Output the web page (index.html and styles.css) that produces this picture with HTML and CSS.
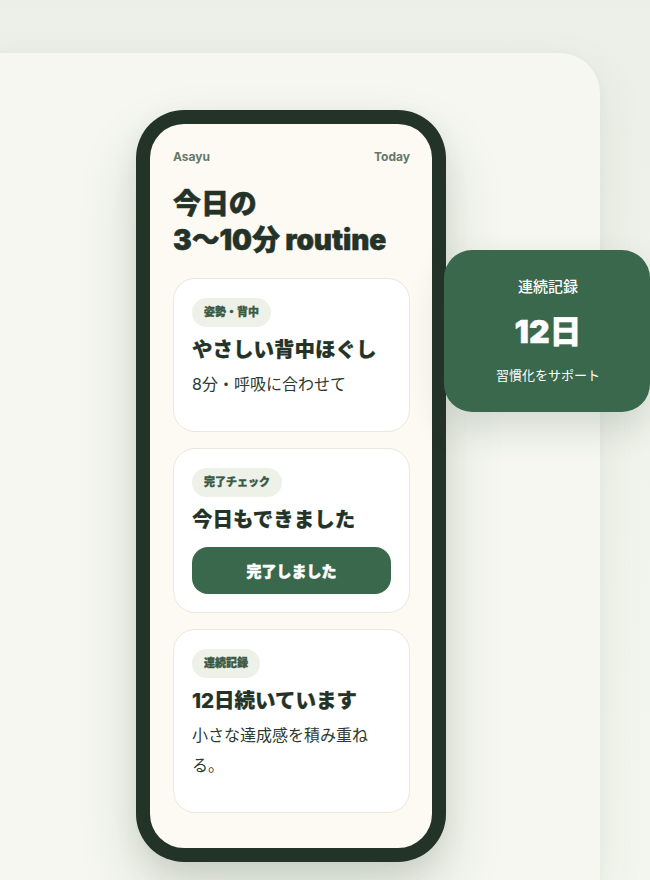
FILE: index.html
```html
<!DOCTYPE html>
<html lang="ja">
<head>
<meta charset="utf-8">
<title>Asayu</title>
<link rel="stylesheet" href="styles.css">
</head>
<body>
<div class="stage">
  <div class="panel">
    <div class="phone">
      <div class="screen">
        <div class="top">
          <span>Asayu</span>
          <span>Today</span>
        </div>
        <h1 class="title">今日の<br>3〜10分 routine</h1>
        <div class="cards">
          <div class="card">
            <span class="pill">姿勢・背中</span>
            <h2 class="card-title">やさしい背中ほぐし</h2>
            <p class="card-text">8分・呼吸に合わせて</p>
          </div>
          <div class="card">
            <span class="pill">完了チェック</span>
            <h2 class="card-title">今日もできました</h2>
            <button class="done">完了しました</button>
          </div>
          <div class="card">
            <span class="pill">連続記録</span>
            <h2 class="card-title">12日続いています</h2>
            <p class="card-text">小さな達成感を積み重ねる。</p>
          </div>
        </div>
      </div>
    </div>
  </div>
  <div class="streak">
    <div class="streak-label">連続記録</div>
    <div class="streak-num">12日</div>
    <div class="streak-sub">習慣化をサポート</div>
  </div>
</div>
</body>
</html>
```
FILE: styles.css
```css
* { box-sizing: border-box; }
html, body {
  margin: 0;
  padding: 0;
  width: 650px;
  height: 880px;
  overflow: hidden;
}
body {
  background: linear-gradient(180deg, #ebefe7 0%, #f1f4ec 60%, #f3f6ee 100%);
  font-family: "Inter", "Noto Sans CJK JP", sans-serif;
  color: #243328;
}
.stage {
  position: relative;
  height: 880px;
  padding-top: 53px;
}
.panel {
  margin-left: -40px;
  width: 640px;
  height: 827px;
  background: #f5f7f0;
  border-radius: 40px 40px 0 0;
  box-shadow: 0 18px 50px rgba(60, 80, 60, 0.08), 0 2px 8px rgba(60, 80, 60, 0.04);
  padding: 57px 0 0 176px;
}
.phone {
  width: 310px;
  height: 752px;
  background: #243328;
  border-radius: 48px;
  padding: 14px;
  box-shadow: 0 30px 60px rgba(40, 60, 40, 0.16), 0 10px 24px rgba(40, 60, 40, 0.08);
}
.screen {
  height: 100%;
  background: #fdf9f3;
  border-radius: 34px;
  padding: 25px 22px 0 23px;
}
.top {
  display: flex;
  justify-content: space-between;
  font-size: 12px;
  font-weight: 700;
  line-height: 15px;
  color: #647868;
}
.title {
  margin: 22px 0 0;
  font-size: 28px;
  line-height: 36px;
  font-weight: 900;
  letter-spacing: -0.1px;
  color: #243328;
  -webkit-text-stroke: 0.5px #243328;
}
.cards {
  margin-top: 20px;
  display: flex;
  flex-direction: column;
  gap: 16px;
}
.card {
  background: #ffffff;
  border: 1px solid #ebe8de;
  border-radius: 22px;
  padding: 19px 18px 18px;
}
.pill {
  display: inline-block;
  height: 29px;
  line-height: 29px;
  padding: 0 12px;
  border-radius: 15px;
  background: #eef1e8;
  color: #3a5a44;
  font-size: 11px;
  font-weight: 900;
  -webkit-text-stroke: 0.35px #3a5a44;
}
.card-title {
  margin: 8px 0 0;
  font-size: 20.5px;
  line-height: 29px;
  font-weight: 800;
  color: #243328;
  -webkit-text-stroke: 0.2px #243328;
}
.card-text {
  margin: 5px 0 14px;
  font-size: 16px;
  line-height: 30px;
  font-weight: 400;
  color: #2c3a30;
}
.done {
  display: block;
  width: 100%;
  height: 47px;
  margin-top: 13px;
  border: none;
  border-radius: 16px;
  background: #3a684c;
  color: #ffffff;
  font-family: "Inter", "Noto Sans CJK JP", sans-serif;
  font-size: 15px;
  font-weight: 900;
  -webkit-text-stroke: 0.5px #ffffff;
}
.streak {
  position: absolute;
  left: 444px;
  top: 250px;
  width: 206px;
  height: 162px;
  border-radius: 28px 28px 28px 28px;
  background: #3a684c;
  color: #ffffff;
  text-align: center;
  padding: 26px 0 0 2px;
  box-shadow: 0 16px 36px rgba(40, 70, 50, 0.16);
}
.streak-label {
  font-size: 15px;
  line-height: 22px;
  font-weight: 500;
}
.streak-num {
  margin-top: 14px;
  font-size: 32px;
  line-height: 40px;
  font-weight: 900;
  -webkit-text-stroke: 0.4px #ffffff;
}
.streak-sub {
  margin-top: 13px;
  font-size: 13px;
  line-height: 20px;
  font-weight: 400;
}
```
